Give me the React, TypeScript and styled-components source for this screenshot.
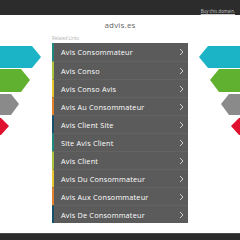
import React from "react";
import styled, { createGlobalStyle } from "styled-components";

const Global = createGlobalStyle`
  html, body { margin: 0; padding: 0; background: #ffffff; }
  body { width: 240px; height: 240px; overflow: hidden; font-family: "Open Sans", "Liberation Sans", sans-serif; }
`;

const Page = styled.div`
  position: relative;
  width: 240px;
  height: 240px;
  display: flex;
  flex-direction: column;
  overflow: hidden;
`;

const TopBar = styled.div`
  height: 15px;
  background: #2c2c2c;
  display: flex;
  align-items: center;
  justify-content: flex-end;
  padding-right: 5px;
  flex-shrink: 0;
`;

const BuyLink = styled.a`
  font-size: 4.4px;
  color: #c8c8c8;
  text-decoration: underline;
  line-height: 5px;
  margin-top: 8px;
`;

const Main = styled.main`
  flex: 1;
  display: flex;
  flex-direction: column;
  align-items: center;
`;

const Title = styled.h1`
  margin: 5px 0 0;
  font-size: 8px;
  line-height: 10px;
  font-weight: 400;
  color: #666666;
  letter-spacing: 0.2px;
`;

const Column = styled.div`
  width: 136px;
  display: flex;
  flex-direction: column;
`;

const Related = styled.div`
  margin-top: 5px;
  margin-bottom: 2px;
  font-size: 4.4px;
  line-height: 6px;
  color: #b0b0b0;
`;

const List = styled.ul`
  margin: 0;
  padding: 0;
  list-style: none;
  display: flex;
  flex-direction: column;
`;

const Row = styled.li<{ $accent: string }>`
  height: 18px;
  box-sizing: border-box;
  display: flex;
  align-items: center;
  justify-content: space-between;
  background: #5b5b5b;
  border-left: 2px solid ${(p) => p.$accent};
  border-top: 1px solid #636363;
  padding: 0 4px 0 7px;
  color: #ffffff;
  font-size: 7.3px;
  font-weight: 500;
  letter-spacing: 0.2px;
  &:first-child { border-top: none; }
`;

const Footer = styled.div`
  height: 6px;
  background: #2c2c2c;
  border-top: 1px solid #4a4a4a;
  flex-shrink: 0;
`;

const Decor = styled.svg<{ $side: "left" | "right" }>`
  position: absolute;
  top: 40px;
  ${(p) => (p.$side === "left" ? "left: 0;" : "right: 0;")}
  width: 45px;
  height: 100px;
`;

const Chevron = () => (
  <svg width="5" height="8" viewBox="0 0 5 8">
    <polyline points="1,1 4,4 1,7" fill="none" stroke="#d8d8d8" strokeWidth="0.9" />
  </svg>
);

const accents = ["#1e8a7e", "#aac43a", "#e7c82a", "#e3802a", "#17506a"];
const links = [
  "Avis Consommateur",
  "Avis Conso",
  "Avis Conso Avis",
  "Avis Au Consommateur",
  "Avis Client Site",
  "Site Avis Client",
  "Avis Client",
  "Avis Du Consommateur",
  "Avis Aux Consommateur",
  "Avis De Consommateur",
];

const shapes = [
  { c: "#1bb3c6", p: "0,6 32,6 41,17 32,28 0,28" },
  { c: "#5fb12f", p: "0,29 21,29 30,40 21,52 0,52" },
  { c: "#8a8a8a", p: "0,54 11,54 19,64 11,75 0,75" },
  { c: "#e01030", p: "0,78 1,78 9,86 1,95 0,95" },
];

const DecorShapes = ({ side }: { side: "left" | "right" }) => (
  <Decor $side={side} viewBox="0 0 45 100">
    <g transform={side === "right" ? "translate(45,0) scale(-1,1)" : undefined}>
      {shapes.map((s) => (
        <polygon key={s.c} points={s.p} fill={s.c} />
      ))}
    </g>
  </Decor>
);

export default function App() {
  return (
    <Page>
      <Global />
      <TopBar>
        <BuyLink>Buy this domain.</BuyLink>
      </TopBar>
      <DecorShapes side="left" />
      <DecorShapes side="right" />
      <Main>
        <Title>advis.es</Title>
        <Column>
          <Related>Related Links</Related>
          <List>
            {links.map((l, i) => (
              <Row key={l} $accent={accents[i % 5]}>
                <span>{l}</span>
                <Chevron />
              </Row>
            ))}
          </List>
        </Column>
      </Main>
      <Footer />
    </Page>
  );
}
